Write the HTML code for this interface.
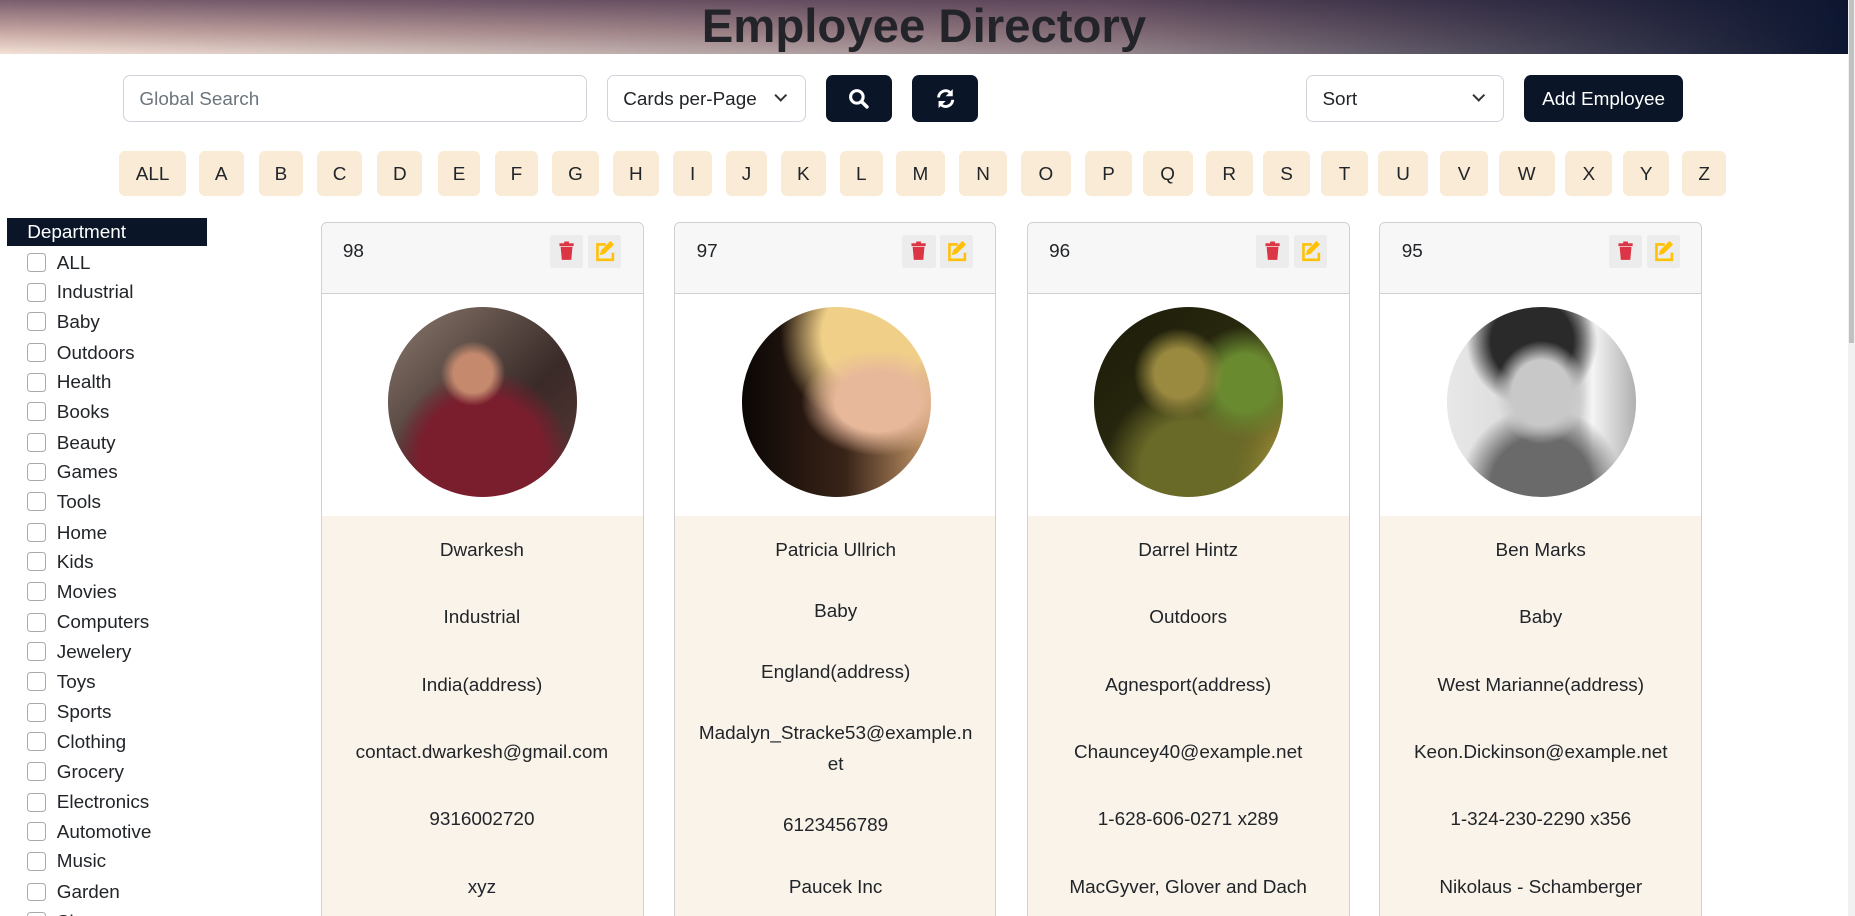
<!DOCTYPE html>
<html><head><meta charset="utf-8"><style>
*{box-sizing:border-box;margin:0;padding:0}
html,body{width:1568px;height:774px;overflow:hidden;background:#fff}
body{zoom:1.18304;font-family:"Liberation Sans",sans-serif;color:#212529;position:relative}
.hdr{position:absolute;left:0;top:0;width:1562px;height:46px;background:linear-gradient(to right,rgba(250,235,215,0) 0%,rgba(60,45,70,.5) 60%,#0d1630 100%),linear-gradient(to bottom,#7a5e6e 0%,#c9a9a4 60%,#f3e2d6 100%)}
.title{position:absolute;left:0;width:1562px;top:-1px;text-align:center;font-size:40px;font-weight:bold;color:#23232a}
.sb{position:absolute;left:1562px;top:0;width:6px;height:774px;background:#f1f1f1}
.sb:after{content:"";position:absolute;left:1px;top:0;width:4px;height:290px;background:#c1c1c1}
.box{position:absolute;border:1px solid #ced4da;border-radius:6px;background:#fff;font-size:16px;color:#212529;padding:2px 13px 0;line-height:38px}
.btn{position:absolute;background:#0a1628;border-radius:6px;color:#fff;font-size:16px;text-align:center;line-height:42px}
.chev{position:absolute;right:16px;top:13px;width:8px;height:8px;border-right:2px solid #333;border-bottom:2px solid #333;transform:rotate(45deg)}
.let{position:absolute;top:128px;height:38px;background:#faebd7;border-radius:5px;font-size:16px;line-height:40px;text-align:center;color:#212529}
.dept{position:absolute;left:6px;top:184px;width:169px;height:24px;background:#0a1628;color:#fff;font-size:16px;padding-left:17px;line-height:26px}
.cb{position:absolute;left:23px;font-size:16px;line-height:22px}
.cb i{position:absolute;left:0;top:2px;width:16px;height:16px;border:1px solid #aaa;border-radius:3px;background:#fff}
.cb span{position:absolute;left:25px;white-space:nowrap}
.card{position:absolute;top:188px;width:273px;height:600px;border:1px solid #d0d0d0;border-radius:5px;overflow:hidden;background:#faf3ea}
.ch{height:60px;background:#f7f7f7;border-bottom:1px solid #d0d0d0;position:relative}
.ch b{position:absolute;left:18px;top:15px;font-weight:normal;font-size:16px}
.ic{position:absolute;top:10px;width:28px;height:28px;background:#ececec;border-radius:2px}
.img{height:187px;background:#fff;position:relative}
.ph{position:absolute;left:56px;top:11px;width:160px;height:160px;border-radius:50%}
.tx{position:absolute;left:0;width:271px;text-align:center;font-size:16px;line-height:26px}
</style></head><body>
<div class="hdr"></div><div class="title">Employee Directory</div>
<div class="sb"></div>
<div class="box" style="left:104px;top:63px;width:392px;height:40px;color:#6c757d">Global Search</div>
<div class="box" style="left:513px;top:63px;width:168px;height:40px">Cards per-Page<div class="chev"></div></div>
<div class="btn" style="left:698px;top:63px;width:56px;height:40px"><svg width="18" height="18" viewBox="0 0 18 18" style="margin-top:11px"><circle cx="7.5" cy="7.5" r="5.3" fill="none" stroke="#fff" stroke-width="2.6"/><path d="M11.5 11.5L16 16" stroke="#fff" stroke-width="3" stroke-linecap="round"/></svg></div>
<div class="btn" style="left:771px;top:63px;width:56px;height:40px"><svg width="18" height="18" viewBox="0 0 18 18" style="margin-top:11px"><path d="M3 8A6 6 0 0 1 14 5" fill="none" stroke="#fff" stroke-width="2.4"/><path d="M15 1v6h-6z" fill="#fff"/><path d="M15 10A6 6 0 0 1 4 13" fill="none" stroke="#fff" stroke-width="2.4"/><path d="M3 17v-6h6z" fill="#fff"/></svg></div>
<div class="box" style="left:1104px;top:63px;width:167px;height:40px">Sort<div class="chev"></div></div>
<div class="btn" style="left:1288px;top:63px;width:135px;height:40px">Add Employee</div>

<div class="let" style="left:101px;width:56px">ALL</div>
<div class="let" style="left:168px;width:38px">A</div>
<div class="let" style="left:219px;width:37px">B</div>
<div class="let" style="left:268px;width:38px">C</div>
<div class="let" style="left:319px;width:38px">D</div>
<div class="let" style="left:370px;width:36px">E</div>
<div class="let" style="left:418px;width:37px">F</div>
<div class="let" style="left:467px;width:39px">G</div>
<div class="let" style="left:518px;width:39px">H</div>
<div class="let" style="left:569px;width:33px">I</div>
<div class="let" style="left:614px;width:34px">J</div>
<div class="let" style="left:660px;width:38px">K</div>
<div class="let" style="left:710px;width:36px">L</div>
<div class="let" style="left:757px;width:42px">M</div>
<div class="let" style="left:811px;width:40px">N</div>
<div class="let" style="left:863px;width:42px">O</div>
<div class="let" style="left:917px;width:40px">P</div>
<div class="let" style="left:966px;width:42px">Q</div>
<div class="let" style="left:1019px;width:40px">R</div>
<div class="let" style="left:1068px;width:39px">S</div>
<div class="let" style="left:1117px;width:39px">T</div>
<div class="let" style="left:1165px;width:42px">U</div>
<div class="let" style="left:1217px;width:41px">V</div>
<div class="let" style="left:1267px;width:47px">W</div>
<div class="let" style="left:1323px;width:40px">X</div>
<div class="let" style="left:1372px;width:39px">Y</div>
<div class="let" style="left:1422px;width:37px">Z</div>

<div class="dept">Department</div>
<div class="cb" style="top:212px"><i></i><span>ALL</span></div>
<div class="cb" style="top:237px"><i></i><span>Industrial</span></div>
<div class="cb" style="top:262px"><i></i><span>Baby</span></div>
<div class="cb" style="top:288px"><i></i><span>Outdoors</span></div>
<div class="cb" style="top:313px"><i></i><span>Health</span></div>
<div class="cb" style="top:338px"><i></i><span>Books</span></div>
<div class="cb" style="top:364px"><i></i><span>Beauty</span></div>
<div class="cb" style="top:389px"><i></i><span>Games</span></div>
<div class="cb" style="top:414px"><i></i><span>Tools</span></div>
<div class="cb" style="top:440px"><i></i><span>Home</span></div>
<div class="cb" style="top:465px"><i></i><span>Kids</span></div>
<div class="cb" style="top:490px"><i></i><span>Movies</span></div>
<div class="cb" style="top:516px"><i></i><span>Computers</span></div>
<div class="cb" style="top:541px"><i></i><span>Jewelery</span></div>
<div class="cb" style="top:566px"><i></i><span>Toys</span></div>
<div class="cb" style="top:592px"><i></i><span>Sports</span></div>
<div class="cb" style="top:617px"><i></i><span>Clothing</span></div>
<div class="cb" style="top:642px"><i></i><span>Grocery</span></div>
<div class="cb" style="top:668px"><i></i><span>Electronics</span></div>
<div class="cb" style="top:693px"><i></i><span>Automotive</span></div>
<div class="cb" style="top:718px"><i></i><span>Music</span></div>
<div class="cb" style="top:744px"><i></i><span>Garden</span></div>
<div class="cb" style="top:769px"><i></i><span>Shoes</span></div>

<svg width="0" height="0" style="position:absolute"><defs>
<symbol id="tr" viewBox="0 0 28 28"><rect x="8" y="7" width="12" height="2.4" fill="#dc3545"/><rect x="12" y="5.5" width="4" height="2" fill="#dc3545"/><path d="M9 10h10l-1 11H10z" fill="#dc3545"/></symbol>
<symbol id="ed" viewBox="0 0 28 28"><path d="M15 8H8v13h13v-6" fill="none" stroke="#ffc107" stroke-width="2.2"/><path d="M19 5l3 3-8 8-4 1 1-4z" fill="#ffc107"/></symbol>
</defs></svg>

<div class="card" style="left:271px">
<div class="ch"><b>98</b><svg class="ic" style="left:193px" viewBox="0 0 28 28"><use href="#tr"/></svg><svg class="ic" style="left:225px" viewBox="0 0 28 28"><use href="#ed"/></svg></div>
<div class="img"><div class="ph" style="background:radial-gradient(circle at 45% 35%,#c58a6e 0 12%,transparent 20%),radial-gradient(circle at 50% 80%,#7a1e2e 0 35%,transparent 50%),linear-gradient(135deg,#8a7a6e,#3a2a28 60%,#5a3a38)"></div></div>
<div class="tx" style="top:264px">Dwarkesh</div><div class="tx" style="top:321px">Industrial</div><div class="tx" style="top:378px">India(address)</div><div class="tx" style="top:435px">contact.dwarkesh@gmail.com</div><div class="tx" style="top:492px">9316002720</div><div class="tx" style="top:549px">xyz</div>
</div>

<div class="card" style="left:570px;width:272px">
<div class="ch"><b>97</b><svg class="ic" style="left:192px" viewBox="0 0 28 28"><use href="#tr"/></svg><svg class="ic" style="left:224px" viewBox="0 0 28 28"><use href="#ed"/></svg></div>
<div class="img"><div class="ph" style="background:radial-gradient(ellipse at 72% 50%,#e8b89a 0 22%,transparent 40%),radial-gradient(circle at 70% 15%,#f0d088 0 25%,transparent 45%),linear-gradient(90deg,#0a0605,#3a2418 55%,#c79a6a)"></div></div>
<div class="tx" style="top:264px">Patricia Ullrich</div><div class="tx" style="top:316px">Baby</div><div class="tx" style="top:367px">England(address)</div><div class="tx" style="top:419px">Madalyn_Stracke53@example.n<br>et</div><div class="tx" style="top:497px">6123456789</div><div class="tx" style="top:549px">Paucek Inc</div>
</div>

<div class="card" style="left:868px;width:273px">
<div class="ch"><b>96</b><svg class="ic" style="left:193px" viewBox="0 0 28 28"><use href="#tr"/></svg><svg class="ic" style="left:225px" viewBox="0 0 28 28"><use href="#ed"/></svg></div>
<div class="img"><div class="ph" style="background:radial-gradient(circle at 45% 35%,#9a8a40 0 15%,transparent 28%),radial-gradient(circle at 80% 40%,#6a8a30 0 15%,transparent 30%),radial-gradient(circle at 50% 85%,#6a6a28 0 25%,transparent 45%),linear-gradient(135deg,#1a1a08,#2a2a10 50%,#b8a840)"></div></div>
<div class="tx" style="top:264px">Darrel Hintz</div><div class="tx" style="top:321px">Outdoors</div><div class="tx" style="top:378px">Agnesport(address)</div><div class="tx" style="top:435px">Chauncey40@example.net</div><div class="tx" style="top:492px">1-628-606-0271 x289</div><div class="tx" style="top:549px">MacGyver, Glover and Dach</div>
</div>

<div class="card" style="left:1166px">
<div class="ch"><b>95</b><svg class="ic" style="left:193px" viewBox="0 0 28 28"><use href="#tr"/></svg><svg class="ic" style="left:225px" viewBox="0 0 28 28"><use href="#ed"/></svg></div>
<div class="img"><div class="ph" style="background:radial-gradient(ellipse at 50% 45%,#c8c8c8 0 22%,transparent 35%),radial-gradient(circle at 45% 18%,#2a2a2a 0 22%,transparent 35%),radial-gradient(circle at 50% 95%,#6a6a6a 0 25%,transparent 40%),linear-gradient(90deg,#e8e8e8,#cfcfcf 70%,#f5f5f5 77%,#b0b0b0)"></div></div>
<div class="tx" style="top:264px">Ben Marks</div><div class="tx" style="top:321px">Baby</div><div class="tx" style="top:378px">West Marianne(address)</div><div class="tx" style="top:435px">Keon.Dickinson@example.net</div><div class="tx" style="top:492px">1-324-230-2290 x356</div><div class="tx" style="top:549px">Nikolaus - Schamberger</div>
</div>
</body></html>
